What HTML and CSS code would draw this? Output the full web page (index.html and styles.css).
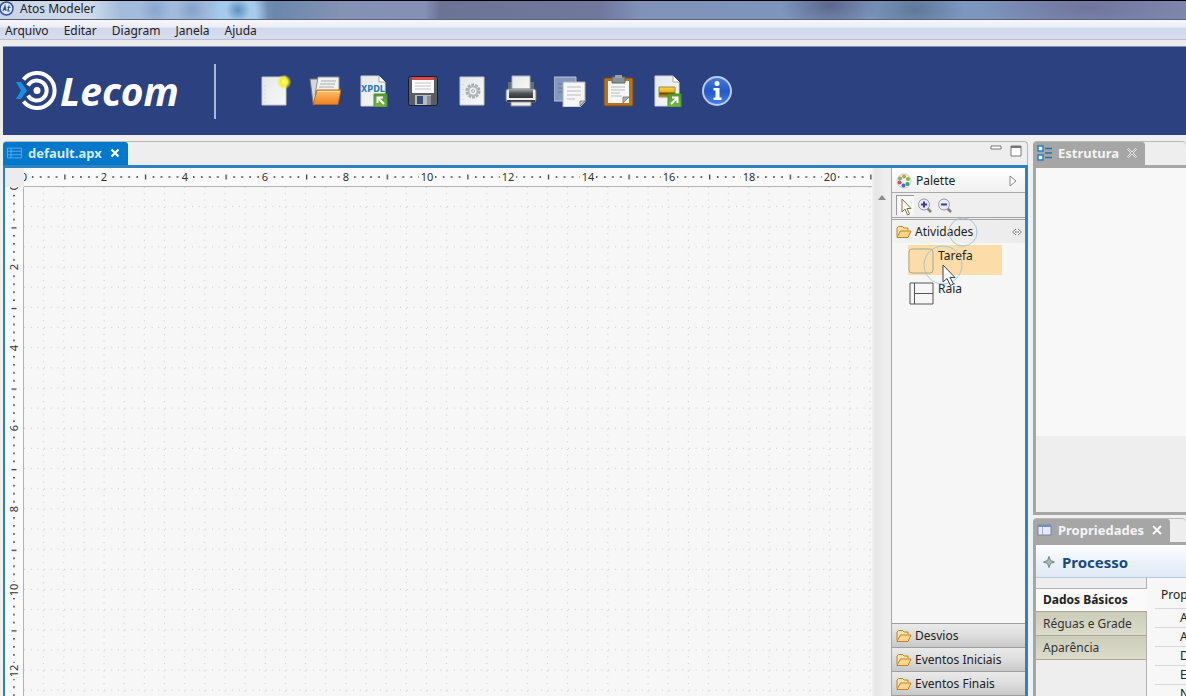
FILE: index.html
```html
<!DOCTYPE html>
<html lang="pt-BR">
<head>
<meta charset="utf-8">
<title>Atos Modeler</title>
<link rel="stylesheet" href="styles.css">
</head>
<body>
<svg class="defs" aria-hidden="true">
  <defs>
    <linearGradient id="paper" x1="0" y1="0" x2="1" y2="1"><stop offset="0" stop-color="#e4e8ea"/><stop offset="1" stop-color="#f8f9f8"/></linearGradient>
    <linearGradient id="orange" x1="0" y1="0" x2="0" y2="1"><stop offset="0" stop-color="#fcc070"/><stop offset="1" stop-color="#f08018"/></linearGradient>
    <linearGradient id="green" x1="0" y1="0" x2="0" y2="1"><stop offset="0" stop-color="#4c9a38"/><stop offset="1" stop-color="#7cb63c"/></linearGradient>
    <linearGradient id="steel" x1="0" y1="0" x2="0" y2="1"><stop offset="0" stop-color="#a4acac"/><stop offset="0.5" stop-color="#4c5254"/><stop offset="1" stop-color="#30363a"/></linearGradient>
    <linearGradient id="blue" x1="0" y1="0" x2="0" y2="1"><stop offset="0" stop-color="#4a7cd8"/><stop offset="0.5" stop-color="#2358c8"/><stop offset="1" stop-color="#4484ec"/></linearGradient>
    <radialGradient id="spark"><stop offset="0" stop-color="#ffff90"/><stop offset="0.5" stop-color="#f4ee20"/><stop offset="1" stop-color="#f4ee20" stop-opacity="0"/></radialGradient>
    <linearGradient id="photo" x1="0" y1="0" x2="0" y2="1"><stop offset="0" stop-color="#f8d848"/><stop offset="0.5" stop-color="#e8b020"/><stop offset="0.6" stop-color="#584008"/><stop offset="1" stop-color="#d8a010"/></linearGradient>
    <symbol id="folder" viewBox="0 0 16 14">
      <path d="M1 11.500V3l1.500-1.500h4L8 3h4v2.500" fill="#ffe2a4" stroke="#c08028"/>
      <path d="M1 12.500 4.500 6H15l-3 6.500z" fill="#fdd68c" stroke="#c08028" stroke-linejoin="round"/>
    </symbol>
    <pattern id="grid" width="20.150" height="20.150" patternUnits="userSpaceOnUse">
      <g fill="#c9c9ce"><rect x="0" y="19" width="1" height="1"/><rect x="6.700" y="19" width="1" height="1"/><rect x="13.400" y="19" width="1" height="1"/>
      <rect x="19" y="6" width="1" height="1"/><rect x="19" y="12.500" width="1" height="1"/><rect x="19" y="0" width="1" height="1"/></g>
    </pattern>
    <pattern id="ticks-x" width="40.300" height="18" patternUnits="userSpaceOnUse">
      <g fill="#333"><rect x="0" y="6.500" width="1.200" height="5"/><rect x="8" y="8" width="1.200" height="2"/><rect x="16" y="8" width="1.200" height="2"/><rect x="24" y="8" width="1.200" height="2"/><rect x="32" y="8" width="1.200" height="2"/></g>
    </pattern>
    <pattern id="ticks-y" width="18" height="40.300" patternUnits="userSpaceOnUse">
      <g fill="#333"><rect x="6.500" y="0" width="5" height="1.200"/><rect x="8" y="8" width="2" height="1.200"/><rect x="8" y="16" width="2" height="1.200"/><rect x="8" y="24" width="2" height="1.200"/><rect x="8" y="32" width="2" height="1.200"/></g>
    </pattern>
  </defs>
</svg>

<div class="app">
  <header class="titlebar">
    <svg class="app-icon" viewBox="0 0 15 15"><circle cx="6.500" cy="7.500" r="6.500" fill="#dfe5f4" stroke="#3450a0" stroke-width="1.500"/><path d="M3 10 5 5l1 5M3.500 8.500h3M9 4.500 8 10h2M7.500 6.500h3" fill="none" stroke="#3450a0" stroke-width="1.200"/></svg>
    <span>Atos Modeler</span>
  </header>

  <nav class="menubar">
    <button>Arquivo</button><button>Editar</button><button>Diagram</button><button>Janela</button><button>Ajuda</button>
  </nav>

  <div class="toolbar">
    <div class="logo">
      <svg class="logo-mark" viewBox="0 0 42 42">
        <g fill="none" stroke="#fff" stroke-width="4"><path d="M7.500 9.500A17.500 17.500 0 1 1 7.500 31.500"/><path d="M12 15.500A10 10 0 1 1 12 25.500"/></g>
        <circle cx="21" cy="20.500" r="3.500" fill="#fff"/>
        <path d="M0 12h5l6 8.500-6 8.500H0l5-8.500z" fill="#1490e4"/>
      </svg>
      <span>Lecom</span>
    </div>
    <div class="tools">
      <button aria-label="Novo"><svg viewBox="0 0 32 32"><path d="M2 2h24v28H2z" fill="url(#paper)" stroke="#c4c8c4"/><path d="M5 10v18" stroke="#d4d4d8" stroke-dasharray="2 2"/><circle cx="24" cy="7" r="7.500" fill="url(#spark)"/></svg></button>
      <button aria-label="Abrir"><svg viewBox="0 0 32 32"><path d="M1 4h12v20l-9 4z" fill="#d4d8da" stroke="#70747c"/><path d="M9 2h21v18H6z" fill="#f0f2f2" stroke="#8c9094"/><path d="M12 6h15M11 9h15M10 12h15" stroke="#a8acac"/><path d="M8 15h24l-3 14.500H4z" fill="url(#orange)" stroke="#c06808"/><path d="M9 16.500h21" stroke="#fde0a8"/></svg></button>
      <button aria-label="Importar XPDL"><svg viewBox="0 0 32 32"><path d="M3 1h18l6 6v24H3z" fill="url(#paper)" stroke="#d0d4d4"/><path d="M21 1v6h6" fill="#fff" stroke="#a0a8a8"/><text x="15" y="17" class="xpdl">XPDL</text><path d="M16 19h13v13H16z" fill="url(#green)" stroke="#4c9030"/><path d="m26 29-6-6M19.500 28v-5.500H25" fill="none" stroke="#fff" stroke-width="2"/></svg></button>
      <button aria-label="Salvar"><svg viewBox="0 0 32 32"><rect x="1.500" y="1.500" width="29" height="29" rx="2" fill="#585e64" stroke="#181c28"/><path d="M5 2h22v16H5z" fill="#fafafa"/><path d="M5 2h22v3H5z" fill="#d84848"/><path d="M8 8h16M8 11h16M8 14h16" stroke="#c4c4c4"/><path d="M8 20h16v10H8z" fill="#b8bcc0"/><path d="M10 21h6v8h-6z" fill="#3c4c74"/><path d="M20 21h4v9h-4z" fill="#888e94"/></svg></button>
      <button aria-label="Configurar"><svg viewBox="0 0 32 32"><path d="M4 2h24v28H4z" fill="url(#paper)" stroke="#c4c8c4"/><circle cx="17" cy="16" r="6" fill="none" stroke="#a8acac" stroke-width="3" stroke-dasharray="2.700 1"/><circle cx="17" cy="16" r="4.500" fill="none" stroke="#b4b8b8" stroke-width="2"/><circle cx="17" cy="16" r="1.500" fill="none" stroke="#a8acac"/><path d="M7 9v16" stroke="#ccc" stroke-dasharray="1 4"/></svg></button>
      <button aria-label="Imprimir"><svg viewBox="0 0 32 32"><path d="M3 7h26v8H3z" fill="#686e70"/><path d="M7 1h18v15H7z" fill="url(#paper)" stroke="#b0b4b4"/><rect x="1" y="14" width="30" height="13" rx="2" fill="#ececec" stroke="#70767a"/><rect x="4" y="14" width="24" height="9" fill="url(#steel)"/><path d="M2 26h28" stroke="#383c40" stroke-width="2"/><path d="M6 27h20v4H6z" fill="#f2eeee" stroke="#888"/></svg></button>
      <button aria-label="Copiar"><svg viewBox="0 0 32 32"><path d="M0 2h22v24H0z" fill="#8498be" stroke="#bac4d8"/><path d="M4 9h6M4 13h6M4 17h6" stroke="#6074a0"/><path d="M9 7h22v20l-5 5H9z" fill="#f6f6f6" stroke="#a8aeb8"/><path d="M13 12h14M13 16h14M13 20h14M13 24h8" stroke="#b8bcc0"/><path d="M26 31v-5h5z" fill="#c0c4c4" stroke="#888"/></svg></button>
      <button aria-label="Colar"><svg viewBox="0 0 32 32"><rect x="1" y="3" width="29" height="28" rx="1" fill="#b67220" stroke="#7c4808"/><path d="M5 6h21v22H5z" fill="#f6f6f6"/><path d="M9 2h13v6H9z" fill="#889098" stroke="#60666c"/><path d="M12 0h7v3h-7z" fill="#9ca2a8"/><path d="M8 12h14M8 15h14M8 18h9M8 21h11" stroke="#b8bcc0"/><path d="M20 28v-6h6z" fill="#a8acac" stroke="#888"/></svg></button>
      <button aria-label="Exportar imagem"><svg viewBox="0 0 32 32"><path d="M3 1h18l6 6v24H3z" fill="url(#paper)" stroke="#d0d4d4"/><path d="M21 1v6h6" fill="#fff" stroke="#a0a8a8"/><path d="M7 12h16v10H7z" fill="url(#photo)" stroke="#988850"/><path d="M16 19h13v13H16z" fill="url(#green)" stroke="#4c9030"/><path d="m19 29 6-6M20 22.500h5.500V28" fill="none" stroke="#fff" stroke-width="2"/></svg></button>
      <button aria-label="Informações"><svg viewBox="0 0 32 32"><circle cx="16" cy="16" r="14" fill="url(#blue)" stroke="#b8cce8" stroke-width="2"/><circle cx="16" cy="8.500" r="2.500" fill="#fff"/><path d="M12.500 13h6v9.500h2V25h-8v-2.500h2v-7h-2z" fill="#fff"/></svg></button>
    </div>
  </div>

  <main class="workbench">
    <section class="editor">
      <div class="tab-strip">
        <div class="tab tab-active">
          <svg class="tab-icon" viewBox="0 0 18 12"><path d="M.5.500h16v11H.5zM.5 4h16M.5 8h16M4.500.500v11" fill="none" stroke="#62b0e8"/></svg>
          <span>default.apx</span>
          <button class="close" aria-label="Fechar default.apx"><svg viewBox="0 0 10 10"><path d="m1.500 1.500 7 7m0-7-7 7" stroke="#fff" stroke-width="2.200"/></svg></button>
        </div>
        <div class="window-buttons">
          <button aria-label="Minimizar"><svg viewBox="0 0 12 12"><path d="M1 1h10v3H1z" fill="#fff" stroke="#777"/></svg></button>
          <button aria-label="Maximizar"><svg viewBox="0 0 12 12"><path d="M1 1h10v10H1z" fill="#fff" stroke="#777"/><path d="M1 2h10" stroke="#777" stroke-width="2"/></svg></button>
        </div>
      </div>
      <div class="editor-body">
        <div class="sheet">
          <div class="corner"></div>
          <svg class="ruler-x">
            <rect width="100%" height="18" fill="url(#ticks-x)"/>
            <g class="ruler-blank"><rect x="-4" y="3" width="8" height="12"/><rect x="76" y="3" width="9" height="12"/><rect x="157" y="3" width="9" height="12"/><rect x="237" y="3" width="9" height="12"/><rect x="318" y="3" width="9" height="12"/><rect x="395" y="3" width="16" height="12"/><rect x="476" y="3" width="16" height="12"/><rect x="556" y="3" width="16" height="12"/><rect x="637" y="3" width="16" height="12"/><rect x="717" y="3" width="16" height="12"/><rect x="798" y="3" width="16" height="12"/></g>
            <g class="ruler-text"><text x="0" y="13">0</text><text x="80" y="13">2</text><text x="161" y="13">4</text><text x="241" y="13">6</text><text x="322" y="13">8</text><text x="403" y="13">10</text><text x="484" y="13">12</text><text x="564" y="13">14</text><text x="645" y="13">16</text><text x="725" y="13">18</text><text x="806" y="13">20</text></g>
          </svg>
          <svg class="ruler-y">
            <rect width="18" height="100%" fill="url(#ticks-y)"/>
            <g class="ruler-blank"><rect x="3" y="-4" width="12" height="8"/><rect x="3" y="76" width="12" height="9"/><rect x="3" y="157" width="12" height="9"/><rect x="3" y="237" width="12" height="9"/><rect x="3" y="318" width="12" height="9"/><rect x="3" y="395" width="12" height="16"/><rect x="3" y="476" width="12" height="16"/></g>
            <g class="ruler-text"><text transform="translate(13 0) rotate(-90)">0</text><text transform="translate(13 80) rotate(-90)">2</text><text transform="translate(13 161) rotate(-90)">4</text><text transform="translate(13 241) rotate(-90)">6</text><text transform="translate(13 322) rotate(-90)">8</text><text transform="translate(13 403) rotate(-90)">10</text><text transform="translate(13 484) rotate(-90)">12</text></g>
          </svg>
          <svg class="canvas"><rect width="100%" height="100%" fill="url(#grid)"/></svg>
        </div>
        <div class="scrollbar"><svg viewBox="0 0 8 5"><path d="M0 5 4 0l4 5z" fill="#8c8c8c"/></svg></div>
        <aside class="palette">
          <div class="palette-title">
            <svg class="icon16" viewBox="0 0 16 16"><circle cx="8" cy="8" r="7" fill="#eef2ee" stroke="#c8d0c8"/><circle cx="8" cy="3.500" r="2" fill="#e09038"/><circle cx="12" cy="6" r="2" fill="#78b848"/><circle cx="11.500" cy="11" r="2" fill="#38a070"/><circle cx="7.500" cy="12.500" r="2" fill="#4868d8"/><circle cx="3.500" cy="9.500" r="2" fill="#d85060"/><circle cx="4" cy="5.500" r="2" fill="#60b878"/></svg>
            <span>Palette</span>
            <button class="palette-end" aria-label="Recolher paleta"><svg viewBox="0 0 8 12"><path d="M1 1v10l6-5z" fill="#fff" stroke="#888"/></svg></button>
          </div>
          <div class="palette-tools">
            <button class="tool-selected" aria-label="Selecionar"><svg viewBox="0 0 16 18"><path d="M4 1v13l3-3 2.500 6 2-1L9 10.500h4z" fill="#fffff0" stroke="#76764c"/></svg></button>
            <button aria-label="Ampliar"><svg viewBox="0 0 16 18"><path d="m10 11 4 4" stroke="#808080" stroke-width="2.500"/><circle cx="7" cy="7.500" r="5.500" fill="#e8ecfa" stroke="#9898a0"/><path d="M4 7.500h6M7 4.500v6" stroke="#3838a8" stroke-width="2"/></svg></button>
            <button aria-label="Reduzir"><svg viewBox="0 0 16 18"><path d="m10 11 4 4" stroke="#808080" stroke-width="2.500"/><circle cx="7" cy="7.500" r="5.500" fill="#e8ecfa" stroke="#9898a0"/><path d="M4 7.500h6" stroke="#3838a8" stroke-width="2"/></svg></button>
          </div>
          <button class="drawer drawer-open"><svg class="icon16"><use href="#folder"/></svg><span>Atividades</span><svg class="pin" viewBox="0 0 12 8"><path d="M5 1 1.500 4 5 7M7 1l3.500 3L7 7M4 4h4" fill="none" stroke="#888"/></svg></button>
          <div class="entries">
            <button class="entry entry-hover"><svg viewBox="0 0 26 26"><rect x="1" y="1" width="24" height="24" rx="3" fill="none" stroke="#a8a890"/></svg><span>Tarefa</span></button>
            <button class="entry"><svg viewBox="0 0 26 26"><path d="M2 2h23v21H2zM6.500 2v21M6.500 12.500H25" fill="none" stroke="#555"/></svg><span>Raia</span></button>
          </div>
          <div class="drawers">
            <button class="drawer"><svg class="icon16"><use href="#folder"/></svg><span>Desvios</span></button>
            <button class="drawer"><svg class="icon16"><use href="#folder"/></svg><span>Eventos Iniciais</span></button>
            <button class="drawer"><svg class="icon16"><use href="#folder"/></svg><span>Eventos Finais</span></button>
          </div>
          <svg class="pointer" viewBox="0 0 70 74" aria-hidden="true"><g fill="none" stroke="#8cc0d8" stroke-opacity=".8"><circle cx="47" cy="15" r="14"/><circle cx="27" cy="48" r="19"/></g><path d="M27 48v17l4-3.500 3.500 7 3-1.500-3.500-6.500h5z" fill="#fff" stroke="#404048"/></svg>
        </aside>
      </div>
    </section>

    <div class="side">
      <section class="view">
        <div class="tab-strip">
          <div class="tab">
            <svg class="tab-icon" viewBox="0 0 16 16"><path d="M1 1h5v5H1zM1 10h5v5H1z" fill="#e4f4fc" stroke="#2880c0" stroke-width="1.500"/><path d="M8 3.500h7M8 8h7M8 12.500h7" stroke="#2870a8" stroke-width="1.500"/></svg>
            <span>Estrutura</span>
            <button class="close" aria-label="Fechar Estrutura"><svg viewBox="0 0 10 10"><path d="m.5 1.500 1-1L5 4 8.500.500l1 1L6 5l3.500 3.500-1 1L5 6 1.500 9.500l-1-1L4 5z" fill="#999" stroke="#fff" stroke-width=".8"/></svg></button>
          </div>
        </div>
        <div class="outline"><div class="outline-page"></div></div>
      </section>

      <section class="view view-props">
        <div class="tab-strip">
          <div class="tab">
            <svg class="tab-icon" viewBox="0 0 16 14"><path d="M1 2h13v10H1z" fill="#e6eaf8" stroke="#7484a8"/><path d="M1 3h13" stroke="#7090c0" stroke-width="2"/><path d="M5.500 4v8" stroke="#a8b0c8"/></svg>
            <span>Propriedades</span>
            <button class="close" aria-label="Fechar Propriedades"><svg viewBox="0 0 10 10"><path d="m1 1 8 8m0-8-8 8" stroke="#fff" stroke-width="1.800"/></svg></button>
          </div>
        </div>
        <div class="props">
          <h2 class="props-title"><svg viewBox="0 0 12 12"><path d="m6 .500 1.500 4L11.500 6l-4 1.500L6 11.500 4.500 7.500.500 6l4-1.500z" fill="#a8bcb4" stroke="#708880"/></svg>Processo</h2>
          <div class="props-body">
            <div class="props-tabs">
              <button class="current">Dados Básicos</button>
              <button>Réguas e Grade</button>
              <button>Aparência</button>
            </div>
            <table class="props-table">
              <thead><tr><th>Prop</th></tr></thead>
              <tbody><tr><td>A</td></tr><tr><td>A</td></tr><tr><td>D</td></tr><tr><td>E</td></tr><tr><td>N</td></tr></tbody>
            </table>
          </div>
        </div>
      </section>
    </div>
  </main>
</div>
</body>
</html>
```
FILE: styles.css
```css
* { box-sizing: border-box; }

body {
  margin: 0;
  font-family: "Noto Sans", "Open Sans", sans-serif;
  font-size: 12px;
  line-height: 16px;
  color: #222;
}

button {
  margin: 0;
  padding: 0;
  border: 0;
  background: none;
  font: inherit;
  color: inherit;
}

svg { display: block; flex: none; }

.defs { position: absolute; width: 0; height: 0; }

.app {
  display: flex;
  flex-direction: column;
  height: 100vh;
  overflow: hidden;
  background: #ececec;
}

.titlebar {
  flex: none;
  display: flex;
  align-items: center;
  gap: 5px;
  height: 20px;
  padding-bottom: 3px;
  border-top: 1px solid #000;
  border-bottom: 1px solid #5c6478;
  background:
    radial-gradient(ellipse 12px 12px at 238px 9px, #5f90bc, transparent),
    radial-gradient(ellipse 30px 40px at 238px 14px, #a4cbec 60%, transparent),
    radial-gradient(ellipse 16px 16px at 155px 9px, #8aa6cc, transparent),
    radial-gradient(ellipse 16px 16px at 192px 9px, #86a2c8, transparent),
    radial-gradient(ellipse 50px 26px at 830px 4px, #5c678c, transparent),
    radial-gradient(ellipse 50px 26px at 915px 8px, #5f7898, transparent),
    radial-gradient(ellipse 110px 26px at 1090px 6px, #70749c, transparent),
    linear-gradient(90deg, #c6d4e8 0, #d0dcec 90px, #a4bcdc 120px, #a0bade 220px, #6a88ac 275px, #8492b4 340px, #868fb4 425px, #6c7496 440px, #70789c 600px, #8092b8 640px, #7c98c0 960px, #8088ac);
}
.app-icon { width: 15px; height: 15px; }

.menubar {
  flex: none;
  display: flex;
  gap: 15px;
  height: 20px;
  padding: 2px 5px 0;
  border-bottom: 1px solid #b8c0d4;
  background: linear-gradient(#f6f6fa 0, #eceef8 35%, #d2d8ec 45%, #d8def2);
  align-items: center;
}

.toolbar {
  flex: none;
  display: flex;
  align-items: center;
  height: 89px;
  margin: 6px 0 0 3px;
  border-top: 1px solid #8890b8;
  background: #2c4180;
}
.logo {
  flex: none;
  display: flex;
  align-items: center;
  gap: 2px;
  width: 213px;
  height: 55px;
  padding-left: 13px;
  border-right: 2px solid #a8b8dc;
  color: #fff;
  font-size: 39px;
  line-height: 40px;
  font-weight: 700;
  font-style: italic;
}
.logo-mark { width: 42px; height: 42px; }
.tools { display: flex; padding-left: 35px; }
.tools button {
  display: flex;
  justify-content: center;
  width: 49px;
}
.tools svg { width: 32px; height: 32px; }
.xpdl {
  fill: #2878b8;
  font: 700 8px "DejaVu Sans", sans-serif;
  text-anchor: middle;
}

.workbench {
  flex: 1;
  display: flex;
  gap: 5px;
  min-height: 0;
  padding: 6px 0 0 3px;
  background: #f0f0f0;
}

.editor {
  flex: 1;
  display: flex;
  flex-direction: column;
  min-width: 0;
}

.tab-strip {
  flex: none;
  display: flex;
  justify-content: space-between;
  height: 24px;
  border-top: 1px solid #b8b8b4;
  border-radius: 4px 4px 0 0;
  background: #eee;
}
.editor .tab-strip { border-right: 1px solid #b8b8b4; }
.tab {
  display: flex;
  align-items: center;
  gap: 5px;
  padding: 0 8px 2px 4px;
  border-radius: 3px 3px 0 0;
  background: #a6a6a6;
  color: #f4f4f4;
  font-weight: 700;
  font-size: 13px;
}
.tab-active { background: #0078cc; color: #d4ecfc; }
.tab-icon { width: 16px; height: 16px; }
.close { padding-left: 3px; }
.close svg { width: 10px; height: 10px; }

.window-buttons {
  display: flex;
  align-items: flex-start;
  gap: 8px;
  padding: 3px 5px;
}
.window-buttons svg { width: 12px; height: 12px; }

.editor-body {
  flex: 1;
  display: flex;
  min-height: 0;
  border: solid #2c83c0;
  border-width: 3px 3px 0 2px;
}

.sheet {
  flex: 1;
  display: grid;
  grid-template: 19px minmax(0, 1fr) / 19px minmax(0, 1fr);
  min-width: 0;
  background: #fafafa;
}
.corner { background: #ececec; }
.ruler-x, .ruler-y, .canvas { width: 100%; height: 100%; }
.ruler-x { border-bottom: 1px solid #b4b4b4; }
.ruler-y { border-right: 1px solid #b4b4b4; }
.canvas { background: #f7f7f7; }
.ruler-blank { fill: #fafafa; }
.ruler-text { fill: #333; font-size: 11px; text-anchor: middle; }

.scrollbar {
  flex: none;
  display: flex;
  justify-content: center;
  width: 19px;
  padding-top: 27px;
  background: linear-gradient(90deg, #f2f2f2, #e6e6e6 20%, #eee 70%);
}
.scrollbar svg { width: 8px; height: 5px; }

.palette {
  position: relative;
  flex: none;
  display: flex;
  flex-direction: column;
  width: 134px;
  border-left: 1px solid #a8a8a8;
  background: #f6f6f6;
}
.icon16 { width: 16px; height: 16px; }
.palette-title {
  display: flex;
  align-items: center;
  gap: 4px;
  height: 25px;
  padding: 1px 8px 0 4px;
  border-bottom: 1px solid #aaa;
  background: linear-gradient(#fff, #f0f0f0);
}
.palette-end { margin-left: auto; }
.palette-end svg { width: 8px; height: 12px; }
.palette-tools {
  display: flex;
  align-items: center;
  gap: 2px;
  height: 27px;
  padding-left: 4px;
  border-bottom: 3px double #a4a4a4;
  background: #efefef;
}
.palette-tools button {
  display: flex;
  justify-content: center;
  align-items: center;
  width: 18px;
  height: 20px;
  padding-top: 2px;
}
.palette-tools .tool-selected {
  border: solid #999;
  border-width: 1px 0 0 1px;
  background: #f8f8f8;
}
.palette-tools svg { width: 16px; height: 18px; }

.drawer {
  display: flex;
  align-items: center;
  gap: 3px;
  height: 24px;
  padding: 0 2px 0 4px;
  border-top: 1px solid #a0a0a0;
  background: linear-gradient(#eaeaea, #ddd 50%, #c8c8c8);
}
.drawer-open {
  height: 23px;
  border-top: 0;
  background: linear-gradient(90deg, #f2f2f2, #ececec);
}
.pin { width: 12px; height: 8px; margin-left: auto; }
.entries { padding: 2px 23px 0 16px; }
.entry {
  display: flex;
  align-items: flex-start;
  gap: 4px;
  width: 100%;
  height: 30px;
  margin-bottom: 3px;
  padding: 3px 0 1px;
}
.entry svg { width: 26px; height: 26px; }
.entry-hover { background: #fcdca8; }
.drawers {
  display: flex;
  flex-direction: column;
  margin-top: auto;
  border-bottom: 1px solid #a0a0a0;
}
.pointer {
  position: absolute;
  top: 49px;
  left: 24px;
  width: 70px;
  height: 74px;
  pointer-events: none;
}

.side {
  flex: none;
  display: flex;
  flex-direction: column;
  gap: 3px;
  width: 153px;
}
.view {
  flex: 2 1 0;
  display: flex;
  flex-direction: column;
  min-height: 0;
}
.view-props { flex: 0 0 178px; }
.outline {
  flex: 1;
  border: 3px solid #a6a6a6;
  border-right: 0;
  background: #eee;
}
.outline-page { height: 78%; background: #f8f8f8; }
.props {
  flex: 1;
  display: flex;
  flex-direction: column;
  min-height: 0;
  border: solid #a6a6a6;
  border-width: 3px 0 0 3px;
  background: #f7f7f7;
}
.props-title {
  flex: none;
  display: flex;
  align-items: center;
  gap: 7px;
  height: 33px;
  margin: 0;
  padding: 1px 0 0 7px;
  border-bottom: 1px solid #b8c8dc;
  background: linear-gradient(#fcfdff, #dfe9f5);
  color: #174a80;
  font-size: 15px;
  font-weight: 700;
}
.props-title svg { width: 12px; height: 12px; }
.props-body {
  flex: 1;
  display: flex;
  gap: 8px;
  min-height: 0;
  overflow: hidden;
}
.props-tabs {
  flex: none;
  display: flex;
  flex-direction: column;
  width: 111px;
  padding-top: 10px;
  border-right: 1px solid #b0b0b0;
  background: #eee;
}
.props-tabs button {
  height: 24px;
  padding-left: 7px;
  border-bottom: 1px solid #a8a898;
  background: linear-gradient(#ccccba, #dcdccc);
  text-align: left;
  color: #333;
}
.props-tabs .current {
  margin-right: -1px;
  border-top: 1px solid #b0b0b0;
  background: #fafafa;
  font-weight: 700;
  color: #222;
}
.props-table {
  flex: 1;
  align-self: flex-start;
  border-collapse: collapse;
}
.props-table th {
  height: 30px;
  padding: 4px 0 0 6px;
  font-weight: 400;
  text-align: left;
}
.props-table td {
  height: 19px;
  padding: 0 0 0 25px;
  border-top: 1px solid #d8d8d8;
}
```
